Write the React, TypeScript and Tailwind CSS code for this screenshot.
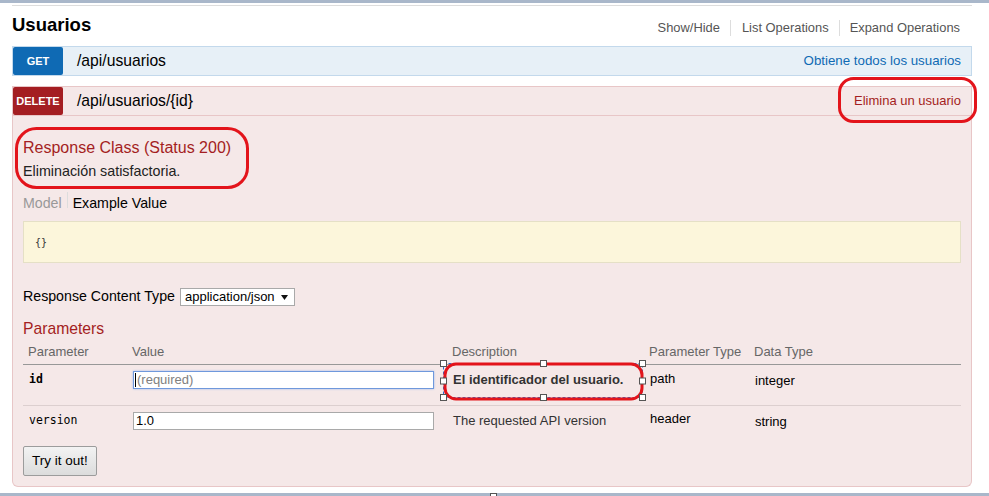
import React from "react";

function Handle({ x, y }: { x: number; y: number }) {
  return <rect x={x - 3} y={y - 3} width={6} height={6} fill="#fff" stroke="#555" strokeWidth={1} />;
}

export default function App() {
  const mono = "font-['DejaVu_Sans_Mono',monospace]";
  return (
    <div className="relative w-[989px] h-[496px] overflow-hidden bg-white font-['Liberation_Sans',Arial,sans-serif] flex flex-col">
      <div className="h-[3px] shrink-0 bg-[#a9b7ca]" />
      <div className="ml-[12px] w-[960px] flex flex-col shrink-0">
        <div className="mt-[2px] border-t border-[#dddddd]" />
        {/* heading */}
        <div className="h-[40px] flex justify-between items-start">
          <h2 className="mt-[8px] text-[18.5px] leading-[22px] font-bold text-black">Usuarios</h2>
          <ul className="mt-[14px] mr-[12px] flex text-[12.9px] leading-[16px] text-[#555]">
            <li className="pr-[10px] border-r border-[#dddddd]">Show/Hide</li>
            <li className="pl-[11px] pr-[10px] border-r border-[#dddddd]">List Operations</li>
            <li className="pl-[10px]">Expand Operations</li>
          </ul>
        </div>

        {/* GET row */}
        <div className="h-[30px] flex items-stretch border border-[#c3d9ec] bg-[#e7f0f7]">
          <div className="w-[50px] rounded-[2px] bg-[#0f6ab4] text-white text-[11px] font-bold flex items-center justify-center">
            GET
          </div>
          <div className="ml-[14px] flex items-center text-[15.7px] text-black">/api/usuarios</div>
          <div className="ml-auto mr-[10px] flex items-center text-[13.3px] text-[#0f6ab4]">Obtiene todos los usuarios</div>
        </div>

        {/* DELETE row */}
        <div className="mt-[10px] h-[30px] flex items-stretch border border-[#e8c6c7] bg-[#f5e8e8]">
          <div className="w-[50px] rounded-[2px] bg-[#a41e22] text-white text-[11px] font-bold flex items-center justify-center">
            DELETE
          </div>
          <div className="ml-[14px] flex items-center text-[15.7px] text-black">/api/usuarios/{"{id}"}</div>
          <div className="ml-auto mr-[10px] flex items-center text-[13px] text-[#a41e22]">Elimina un usuario</div>
        </div>

        {/* content panel */}
        <div className="border border-t-0 border-[#e8c6c7] bg-[#f5e8e8] rounded-b-[6px] px-[10px] pt-[22px] pb-[10px]">
          <h4 className="text-[16px] leading-[20px] text-[#a41e22]">Response Class (Status 200)</h4>
          <p className="mt-[4px] text-[14.3px] leading-[18px] text-[#222]">Eliminación satisfactoria.</p>
          <div className="mt-[12px] flex items-start text-[14.2px] leading-[16px]">
            <span className="pt-[3px] text-[#999]">Model</span>
            <span className="ml-[5px] w-px h-[16px] bg-[#dddddd]" />
            <span className="ml-[5px] pt-[3px] text-black">Example Value</span>
          </div>
          <div className="mt-[10px] h-[42px] border border-[#e5e0c6] bg-[#fcf6db] flex items-center px-[11px]">
            <span className={`${mono} text-[10px] text-[#333]`}>{"{}"}</span>
          </div>

          <div className="mt-[25px] h-[18px] flex items-center">
            <span className="text-[14.2px] text-black">Response Content Type</span>
            <div className="ml-[5px] h-[18px] w-[115px] border border-[#a9a9a9] bg-white flex items-center pl-[4px] text-[13px] text-black">
              <span>application/json</span>
              <svg className="ml-auto mr-[6px]" width="7" height="5" viewBox="0 0 7 5">
                <path d="M0 0 L7 0 L3.5 5 Z" fill="#111" />
              </svg>
            </div>
          </div>

          <h4 className="mt-[13px] text-[15.7px] leading-[20px] text-[#a41e22]">Parameters</h4>

          {/* table */}
          <div className="grid grid-cols-[104px_320px_197px_105px_1fr] border-b border-[#989898] text-[13px] leading-[16px] text-[#666]">
            <div className="pl-[5px] pt-[5px] pb-[4px]">Parameter</div>
            <div className="pl-[5px] pt-[5px] pb-[4px]">Value</div>
            <div className="pl-[5px] pt-[5px] pb-[4px]">Description</div>
            <div className="pl-[5px] pt-[5px] pb-[4px]">Parameter Type</div>
            <div className="pl-[5px] pt-[5px] pb-[4px]">Data Type</div>
          </div>
          <div className="grid grid-cols-[104px_320px_197px_105px_1fr] h-[41px] border-b border-[#dccfcf] text-[13px] leading-[18px]">
            <div className={`pl-[6px] pt-[5px] ${mono} text-[11.5px] font-bold text-black`}>id</div>
            <div className="pl-[6px] pt-[6px]">
              <div className="w-[301px] h-[18px] border border-[#6f98dc] bg-white shadow-[0_0_2px_#9dbbee] flex items-center pl-[1px]">
                <span className="w-px h-[14px] bg-black" />
                <span className="ml-px text-[13px] text-[#808080]">(required)</span>
              </div>
            </div>
            <div className="pl-[6px] pt-[6px] font-bold text-[#333]">El identificador del usuario.</div>
            <div className="pl-[6px] pt-[5px] text-black">path</div>
            <div className="pl-[6px] pt-[7px] text-black">integer</div>
          </div>
          <div className="grid grid-cols-[104px_320px_197px_105px_1fr] h-[30px] text-[13px] leading-[18px]">
            <div className={`pl-[6px] pt-[5px] ${mono} text-[11.5px] text-black`}>version</div>
            <div className="pl-[6px] pt-[6px]">
              <div className="w-[301px] h-[18px] border border-[#a9a9a9] bg-white flex items-center pl-[2px] text-[13px] text-black">
                1.0
              </div>
            </div>
            <div className="pl-[6px] pt-[6px] text-[#333]">The requested API version</div>
            <div className="pl-[6px] pt-[4px] text-black">header</div>
            <div className="pl-[6px] pt-[7px] text-black">string</div>
          </div>

          <button className="mt-[10px] h-[30px] w-[74px] border border-[#9c9c9c] rounded-[2px] bg-gradient-to-b from-[#f3f3f3] to-[#dcdcdc] text-[13.5px] text-black">
            Try it out!
          </button>
        </div>
      </div>
      <div className="flex-1" />
      <div className="h-[3px] shrink-0 bg-[#a9b7ca]" />

      {/* annotations overlay */}
      <svg className="absolute inset-0 pointer-events-none" width="989" height="496" viewBox="0 0 989 496">
        <rect x="839.5" y="78.5" width="136" height="43" rx="14" fill="none" stroke="#e3141b" strokeWidth="3" />
        <rect x="16.5" y="128.5" width="231" height="59" rx="20" fill="none" stroke="#e3141b" strokeWidth="3" />
        <rect x="443.5" y="363.5" width="199" height="34" fill="none" stroke="#2c6fd1" strokeWidth="1" strokeDasharray="3 2" />
        <rect x="445" y="364" width="197" height="35" rx="11" fill="none" stroke="#e3141b" strokeWidth="3" />
        <Handle x={443.5} y={363.5} />
        <Handle x={543.5} y={363.5} />
        <Handle x={642.5} y={363.5} />
        <Handle x={443.5} y={381} />
        <Handle x={642.5} y={381} />
        <Handle x={443.5} y={397.5} />
        <Handle x={543.5} y={397.5} />
        <Handle x={642.5} y={397.5} />
        <Handle x={493.5} y={496.5} />
      </svg>
    </div>
  );
}
